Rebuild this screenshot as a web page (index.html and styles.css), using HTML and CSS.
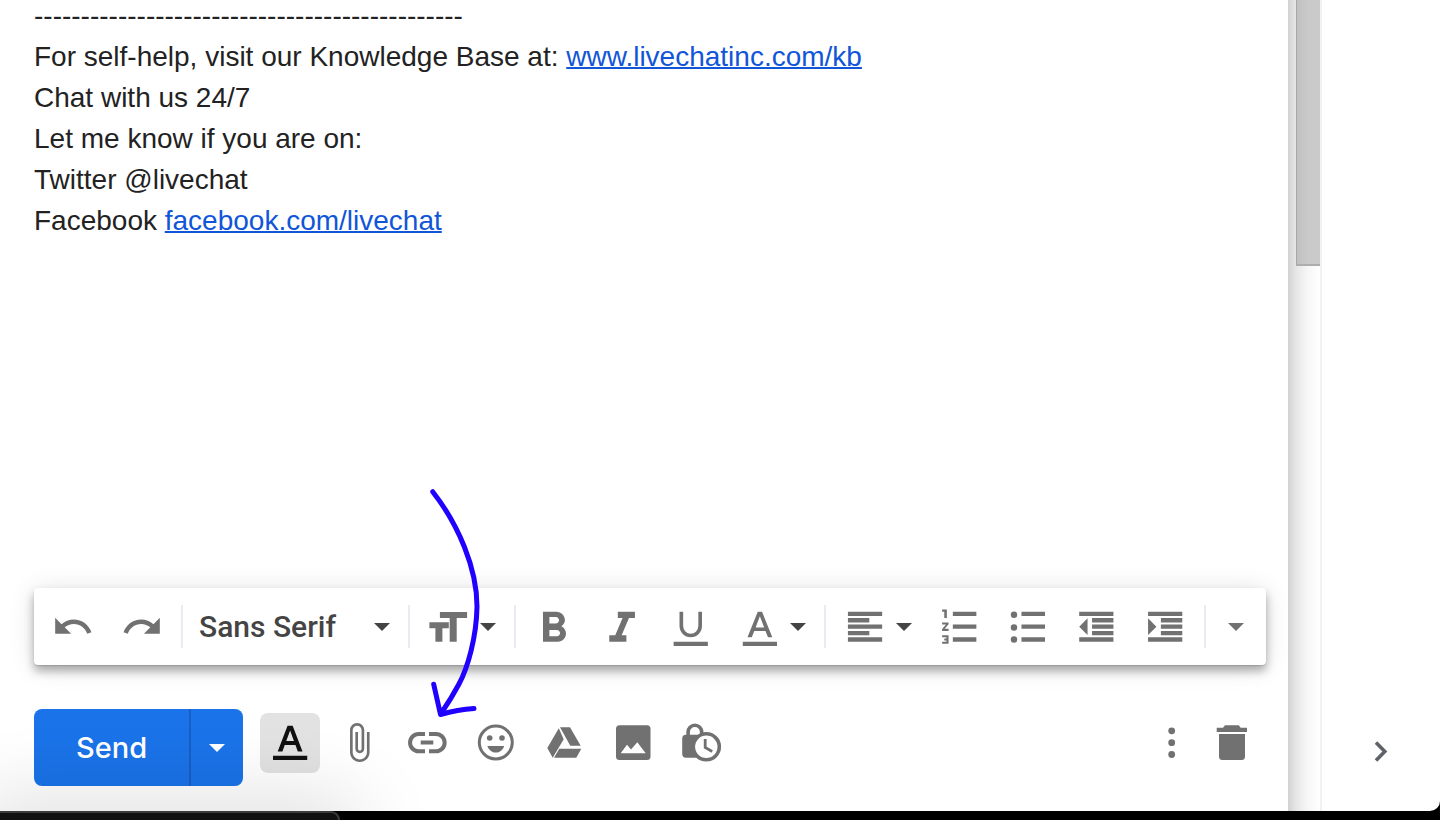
FILE: index.html
```html
<!DOCTYPE html>
<html lang="en">
<head>
<meta charset="utf-8">
<title>Compose message</title>
<link rel="stylesheet" href="styles.css">
</head>
<body>
<main class="window">
  <section class="compose" aria-label="Message">
    <div class="message">
      ----------------------------------------------<br>
      For self-help, visit our Knowledge Base at: <a href="#kb">www.livechatinc.com/kb</a><br>
      Chat with us 24/7<br>
      Let me know if you are on:<br>
      Twitter @livechat<br>
      Facebook <a href="#facebook">facebook.com/livechat</a>
    </div>

    <div class="toolbar" role="toolbar" aria-label="Formatting">
      <button class="tool" type="button" aria-label="Undo"><svg class="icon" viewBox="1.9 .9 22.6 22.6"><path d="M12.5 8c-2.65 0-5.05.99-6.9 2.6L2 7v9h9l-3.62-3.62c1.39-1.16 3.16-1.88 5.12-1.88 3.54 0 6.55 2.31 7.6 5.5l2.37-.78C21.08 11.03 17.15 8 12.5 8z"/></svg></button>
      <button class="tool" type="button" aria-label="Redo"><svg class="icon" viewBox="1.2 .9 22.6 22.6"><path d="M18.4 10.6C16.55 8.99 14.15 8 11.5 8c-4.65 0-8.58 3.03-9.96 7.22L3.9 16c1.05-3.19 4.05-5.5 7.6-5.5 1.95 0 3.73.72 5.12 1.88L13 16h9V7l-3.6 3.6z"/></svg></button>
      <span class="divider"></span>
      <div class="picker">
        <select class="picker-select" aria-label="Font"><option>Sans Serif</option><option>Serif</option><option>Fixed Width</option></select>
        <svg class="caret" viewBox="0 0 16 8"><path d="M0 0h16L8 8z"/></svg>
      </div>
      <span class="divider"></span>
      <button class="tool-menu" type="button" aria-label="Size"><svg class="icon" viewBox=".6 0 40 40"><path d="M0 15.3h19.4v6H13v13.4H6V21.3H0zM10.5 5h27.2v6H27.3v23.7h-7V11h-9.8z"/></svg><svg class="caret" viewBox="0 0 16 8"><path d="M0 0h16L8 8z"/></svg></button>
      <span class="divider"></span>
      <button class="tool" type="button" aria-label="Bold"><svg class="icon" viewBox="2.8 1.8 18.7 18.7"><path d="M15.6 10.79c.97-.67 1.65-1.77 1.65-2.79 0-2.26-1.75-4-4-4H7v14h7.04c2.09 0 3.71-1.7 3.71-3.79 0-1.52-.86-2.82-2.15-3.42zM10 6.5h3c.83 0 1.5.67 1.5 1.5s-.67 1.5-1.5 1.5h-3v-3zm3.5 9H10v-3h3.5c.83 0 1.5.67 1.5 1.5s-.67 1.5-1.5 1.5z"/></svg></button>
      <button class="tool" type="button" aria-label="Italic"><svg class="icon" viewBox="2.6 1.8 18.7 18.7"><path d="M10 4v3h2.21l-3.42 8H6v3h8v-3h-2.21l3.42-8H18V4z"/></svg></button>
      <button class="tool" type="button" aria-label="Underline"><svg class="icon" viewBox="2.3 1.8 18.7 18.7"><path fill="none" stroke="currentColor" stroke-width="1.7" d="M7.6 4v6.7a4.4 4.4 0 0 0 8.8 0V4"/><path d="M4 18h16v2H4z"/></svg></button>
      <button class="tool-menu" type="button" aria-label="Text color"><svg class="icon" viewBox="2.7 1.8 18.7 18.7"><path d="M6.2 16 11 4h2l4.8 12h-2l-1.2-3H9.4l-1.2 3zm3.8-4.6h4L12 6.1zM4 18h16v2H4z"/></svg><svg class="caret" viewBox="0 0 16 8"><path d="M0 0h16L8 8z"/></svg></button>
      <span class="divider"></span>
      <button class="tool-menu" type="button" aria-label="Align"><svg class="icon" viewBox="3.1 1.8 18.7 18.7"><path d="M4 4h16v2H4zM4 7h10v2H4zM4 10h16v2H4zM4 13h10v2H4zM4 16h16v2H4z"/></svg><svg class="caret" viewBox="0 0 16 8"><path d="M0 0h16L8 8z"/></svg></button>
      <button class="tool" type="button" aria-label="Numbered list"><svg class="icon" viewBox="3 1.8 18.7 18.7"><path d="M4 16h2v.5H5v1h1v.5H4v1h3v-4H4zM5 7h1.2V3H4v1h1zM4 10h1.800L4 12.1v.9h3v-1H5.2L7 9.9V9H4zM9 4h11v2H9zM9 10h11v2H9zM9 16h11v2H9z"/></svg></button>
      <button class="tool" type="button" aria-label="Bulleted list"><svg class="icon" viewBox="2.7 1.8 18.7 18.7"><circle cx="5.5" cy="5.4" r="1.5"/><circle cx="5.5" cy="11.4" r="1.5"/><circle cx="5.5" cy="17" r="1.5"/><path d="M9 4h11v2H9zM9 10h11v2H9zM9 16h11v2H9z"/></svg></button>
      <button class="tool" type="button" aria-label="Indent less"><svg class="icon" viewBox="2.5 1.8 18.7 18.7"><path d="M4 4h16v2H4zM10 7h10v2H10zM10 10h10v2H10zM10 13h10v2H10zM4 16h16v2H4zM4 11l3.900-3.900v7.800z"/></svg></button>
      <button class="tool" type="button" aria-label="Indent more"><svg class="icon" viewBox="2.1 1.8 18.7 18.7"><path d="M4 4h16v2H4zM10 7h10v2H10zM10 10h10v2H10zM10 13h10v2H10zM4 16h16v2H4zM7.9 11L4 7.1v7.8z"/></svg></button>
      <span class="divider divider-end"></span>
      <button class="tool tool-more" type="button" aria-label="More formatting options"><svg class="caret" viewBox="0 0 16 8"><path d="M0 0h16L8 8z"/></svg></button>
    </div>

    <div class="actions">
      <div class="send-group">
        <button class="send" type="button">Send</button>
        <button class="send-more" type="button" aria-label="More send options"><svg class="caret" viewBox="0 0 16 8"><path d="M0 0h16L8 8z"/></svg></button>
      </div>
      <div class="attach-group">
        <button class="action action-on" type="button" aria-label="Formatting options"><svg class="icon" viewBox="2.6 2.7 18.7 18.7"><path d="M6.2 16 10.8 4h2.4l4.6 12h-2.2l-1.1-3h-5l-1.1 3zm4-4.9h3.6L12 6.2zM4 18h16v2H4z"/></svg></button>
        <button class="action" type="button" aria-label="Attach files"><svg class="icon" viewBox=".8 1 22.5 22.5"><path d="M16.5 6v11.5c0 2.21-1.79 4-4 4s-4-1.79-4-4V5c0-1.38 1.12-2.5 2.5-2.5s2.5 1.12 2.5 2.5v10.5c0 .55-.45 1-1 1s-1-.45-1-1V6H10v9.5c0 1.38 1.12 2.5 2.5 2.5s2.5-1.12 2.5-2.5V5c0-2.21-1.79-4-4-4S7 2.79 7 5v12.5c0 3.04 2.46 5.5 5.5 5.5s5.5-2.46 5.5-5.5V6h-1.5z"/></svg></button>
        <button class="action" type="button" aria-label="Insert link"><svg class="icon" viewBox="1 0 40 40"><path fill="none" stroke="currentColor" stroke-width="4" d="M18 11h-6.3a8.65 8.65 0 0 0 0 17.3H18M22 11h7a8.65 8.65 0 0 1 0 17.3h-7M13.7 19.6h12.6"/></svg></button>
        <button class="action" type="button" aria-label="Insert emoji"><svg class="icon" viewBox="1 0 40 40"><circle cx="19.8" cy="19.5" r="16.5" fill="none" stroke="currentColor" stroke-width="3"/><circle cx="13.7" cy="15" r="2.8"/><circle cx="26" cy="15" r="2.8"/><path d="M11.4 23h16.8c-1.3 4-4.5 6.6-8.4 6.6s-7.1-2.6-8.4-6.6z"/></svg></button>
        <button class="action" type="button" aria-label="Insert files using Drive"><svg class="icon" viewBox="1 0 40 40"><path d="M13.8 5.3l4.9 10.9-11 18.5L2.3 25zM15 4.3h10l10.7 18.4H25.3zM14.3 25.7h22l-5 9H9z"/></svg></button>
        <button class="action" type="button" aria-label="Insert photo"><svg class="icon" viewBox="1 0 40 40"><rect x="2" y="2.3" width="34.5" height="34.7" rx="3.5"/><path fill="#fff" d="M6.7 30.3 13 21.7l4 4.8 6.3-7.2 8.4 11z"/></svg></button>
        <button class="action" type="button" aria-label="Confidential mode"><svg class="icon" viewBox="1.5 0 40 40"><path d="M3.5 11.7h17.6v23H3.5A3.8 3.8 0 0 1-.3 31V15.5a3.8 3.8 0 0 1 3.8-3.8z"/><path fill="none" stroke="currentColor" stroke-width="3.6" d="M5.6 12.5V9a6.8 6.8 0 0 1 13.6 0v3.5"/><circle cx="23.8" cy="23.8" r="13" fill="#fff" stroke="currentColor" stroke-width="3.6"/><path fill="none" stroke="currentColor" stroke-width="2.8" d="M22.7 16v8.5l7 4"/></svg></button>
      </div>
      <div class="end-group">
        <button class="action" type="button" aria-label="More options"><svg class="icon" viewBox="0 0 40 40"><circle cx="19.7" cy="7.8" r="3.4"/><circle cx="19.7" cy="19.7" r="3.4"/><circle cx="19.7" cy="31.5" r="3.4"/></svg></button>
        <button class="action" type="button" aria-label="Discard draft"><svg class="icon" viewBox="0 0 40 40"><path d="M4.7 4.7H11l2-2.4h13.7l2 2.4H35V9H4.7zM7 11h26v22.5a3.5 3.5 0 0 1-3.5 3.5h-19A3.5 3.5 0 0 1 7 33.5z"/></svg></button>
      </div>
    </div>
    <svg class="arrow" viewBox="0 0 60 240" aria-hidden="true"><path d="M12.700 11.700C38 44 57 88 57 126.500C56.500 158 47.500 188 39 204Q31 219 21 233.500M13.700 204.300L20.500 234.500Q38 229.500 54 228.500"/></svg>
  </section>

  <div class="gutter"><div class="thumb"></div></div>

  <aside class="side">
    <button class="side-toggle" type="button" aria-label="Hide side panel"><svg class="icon" viewBox="0 0 40 40"><path fill="none" stroke="currentColor" stroke-width="3.6" d="M15 10.5l8.8 9-8.8 9"/></svg></button>
  </aside>
</main>
<footer class="desktop"><div class="dock"></div></footer>
</body>
</html>
```
FILE: styles.css
```css
* {
  box-sizing: border-box;
}

body {
  margin: 0;
  min-height: 100vh;
  display: flex;
  flex-direction: column;
  background: #000;
  font-family: "Liberation Sans", Arial, sans-serif;
  color: #222;
}

button {
  border: 0;
  padding: 0;
  background: none;
  color: inherit;
  font: inherit;
  cursor: pointer;
}

svg {
  display: block;
  fill: currentColor;
}

.window {
  flex: 1;
  display: flex;
  background: #fff;
  border-bottom-right-radius: 10px;
  overflow: hidden;
}

.compose {
  position: relative;
  flex: 1;
  min-width: 0;
  display: flex;
  flex-direction: column;
  padding: 0 22px 25px 34px;
}

.message {
  flex: 1;
  margin-top: -5px;
  font-size: 28px;
  line-height: 41px;
}

.message a {
  color: #1155d8;
  text-decoration-thickness: 2px;
}

.toolbar {
  display: flex;
  align-items: center;
  height: 77px;
  margin-bottom: 44px;
  padding: 0 4px 0 7px;
  border-radius: 4px;
  background: #fff;
  color: #717171;
  box-shadow: 0 1px 1px rgba(0, 0, 0, .12), 0 6px 10px rgba(0, 0, 0, .3), 0 2px 26px rgba(0, 0, 0, .12);
}

.tool,
.tool-menu {
  flex: none;
  display: flex;
  align-items: center;
  justify-content: center;
  height: 60px;
}

.tool {
  width: 68px;
}

.tool-more {
  width: 52px;
}

.tool-menu {
  gap: 10px;
  padding: 0 14px 0 16px;
}

.icon {
  flex: none;
  width: 40px;
  height: 40px;
  overflow: visible;
}

.caret {
  flex: none;
  width: 16px;
  height: 8px;
  color: #444;
}

.tool-more .caret {
  color: #717171;
}

.divider {
  flex: none;
  width: 2px;
  height: 43px;
  margin: 0 4px;
  background: #e8ebef;
}

.divider-end {
  margin-left: auto;
}

.picker {
  flex: none;
  display: grid;
  align-items: center;
  width: 217px;
}

.picker-select,
.picker .caret {
  grid-area: 1 / 1;
}

.picker .caret {
  justify-self: end;
  margin-right: 14px;
  pointer-events: none;
}

.picker-select {
  appearance: none;
  width: 100%;
  height: 60px;
  padding: 0 0 0 12px;
  border: 0;
  background: none;
  color: #444;
  font: 500 30px Roboto, sans-serif;
}

.actions {
  display: flex;
  align-items: flex-start;
}

.send-group {
  display: flex;
  height: 77px;
  border-radius: 8px;
  overflow: hidden;
  background: #1a73e8;
  color: #fff;
}

.send {
  width: 155px;
  font: 500 29px Inter, sans-serif;
}

.send-more {
  display: flex;
  align-items: center;
  justify-content: center;
  width: 54px;
  border-left: 2px solid #1a5dc4;
}

.send-more .caret {
  color: #fff;
}

.attach-group,
.end-group {
  display: flex;
  margin-top: 4px;
  color: #717171;
}

.attach-group {
  gap: 9px;
  margin-left: 17px;
}

.end-group {
  margin-left: auto;
  margin-right: 4px;
}

.action {
  display: flex;
  align-items: center;
  justify-content: center;
  width: 60px;
  height: 60px;
  border-radius: 8px;
}

.action-on {
  background: #e2e2e2;
  color: #111;
}

.arrow {
  position: absolute;
  left: 420px;
  bottom: 91px;
  width: 60px;
  height: 240px;
  overflow: visible;
  fill: none;
  stroke: #2000ff;
  stroke-width: 5;
  stroke-linecap: round;
  stroke-linejoin: round;
  pointer-events: none;
}

.gutter {
  width: 34px;
  padding-left: 8px;
  border-right: 2px solid #f1f1f1;
  background: linear-gradient(to right, #d2d2d2, #e6e6e6 25%, #f6f6f6 60%, #fff);
}

.thumb {
  height: 266px;
  border-left: 1px solid #a6a6a6;
  border-bottom: 2px solid #adadad;
  background: linear-gradient(to right, #c0c0c0, #cacaca 50%);
}

.side {
  display: flex;
  flex-direction: column;
  justify-content: flex-end;
  align-items: center;
  width: 118px;
  padding-bottom: 39px;
  color: #5f6368;
}

.desktop {
  position: relative;
  height: 9px;
  background: #000;
}

.dock {
  width: 340px;
  height: 9px;
  border-top: 2px solid #3c3c3c;
  border-right: 2px solid #3c3c3c;
  border-top-right-radius: 9px;
  background: #111;
  box-shadow: 0 14px 80px 20px rgba(0, 0, 0, .18);
}
```
